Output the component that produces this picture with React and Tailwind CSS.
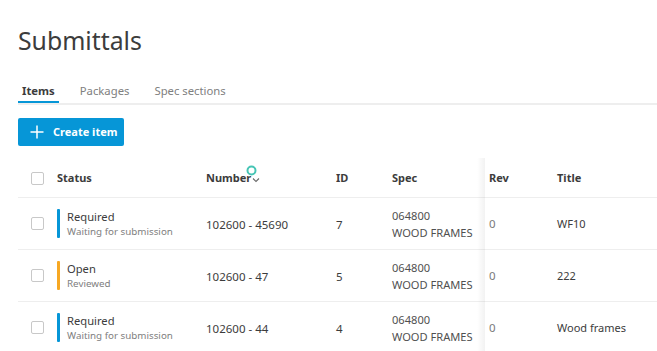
import React from "react";

const rows = [
  { status: "Required", sub: "Waiting for submission", bar: "bg-[#0696d7]", number: "102600 - 45690", id: "7", title: "WF10" },
  { status: "Open", sub: "Reviewed", bar: "bg-[#f7a823]", number: "102600 - 47", id: "5", title: "222" },
  { status: "Required", sub: "Waiting for submission", bar: "bg-[#0696d7]", number: "102600 - 44", id: "4", title: "Wood frames" },
];

function Checkbox() {
  return <div className="w-[13px] h-[13px] border border-[#c8c8c8] rounded-[2px] bg-white" />;
}

export default function App() {
  return (
    <div className="w-[657px] h-[351px] overflow-hidden bg-white text-[#3c3c3c]" style={{ fontFamily: '"Noto Sans", "Open Sans", sans-serif' }}>
      <div className="pl-[18px]">
        <h1 className="pt-[25px] text-[24.8px] leading-[30px] font-normal text-[#3c3c3c]">Submittals</h1>
        <div className="mt-[23px] flex gap-[17px] border-b-2 border-[#eeeeee]">
          <div className="px-[4px] h-[25px] -mb-[2px] border-b-2 border-[#0696d7] text-[11.3px] leading-[25px] font-bold text-[#3c3c3c]">Items</div>
          <div className="px-[4px] h-[25px] text-[11.3px] leading-[25px] text-[#808080]">Packages</div>
          <div className="px-[4px] h-[25px] text-[11.3px] leading-[25px] text-[#808080]">Spec sections</div>
        </div>
        <button className="mt-[13px] h-[28px] w-[106px] rounded-[2px] bg-[#0696d7] flex items-center pl-[12px] text-white text-[11px] font-bold">
          <svg width="14" height="14" viewBox="0 0 14 14" className="mr-[9px]">
            <path d="M7 0.5V13.5M0.5 7H13.5" stroke="white" strokeWidth="1.5" />
          </svg>
          Create item
        </button>
        <div className="relative mt-[14px]">
          <div className="flex items-center h-[38px] border-b border-[#eeeeee] text-[11px] font-bold text-[#3c3c3c]">
            <div className="w-[39px] pl-[13px]"><Checkbox /></div>
            <div className="w-[149px]">Status</div>
            <div className="w-[130px] relative flex items-center">
              <span>Number</span>
              <svg width="8" height="6" viewBox="0 0 8 6" className="ml-[1px] mt-[3px]">
                <path d="M1 1.5L4 4.5L7 1.5" stroke="#6a6a6a" strokeWidth="1.1" fill="none" />
              </svg>
              <svg width="11" height="11" viewBox="0 0 11 11" className="absolute left-[40px] -top-[5px]">
                <circle cx="5.5" cy="5.5" r="4" stroke="#46c5b5" strokeWidth="2" fill="white" />
              </svg>
            </div>
            <div className="w-[56px]">ID</div>
            <div className="w-[93px]">Spec</div>
            <div className="w-[72px] pl-[4px]">Rev</div>
            <div>Title</div>
          </div>
          {rows.map((r, i) => (
            <div key={i} className="flex items-center h-[52px] border-b border-[#eeeeee] text-[11px] text-[#3c3c3c]">
              <div className="w-[39px] pl-[13px]"><Checkbox /></div>
              <div className="w-[149px] flex items-center">
                <div className={`w-[3px] h-[29px] rounded-[1px] ${r.bar}`} />
                <div className="ml-[7px] flex flex-col">
                  <span className="leading-[16px] text-[11.2px]">{r.status}</span>
                  <span className="text-[9.8px] leading-[14px] text-[#808080]">{r.sub}</span>
                </div>
              </div>
              <div className="w-[130px] text-[11.5px] mt-[2px]">{r.number}</div>
              <div className="w-[56px] text-[11.5px] mt-[2px]">{r.id}</div>
              <div className="w-[93px] flex flex-col text-[11.1px] leading-[17px] text-[#505050] mt-[1px]">
                <span>064800</span>
                <span>WOOD FRAMES</span>
              </div>
              <div className="w-[72px] pl-[4px] text-[11.5px] text-[#7a7a7a]">0</div>
              <div className="text-[11px] mt-[2px]">{r.title}</div>
            </div>
          ))}
          <div className="absolute left-[459px] top-[-2px] bottom-0 w-[8px] bg-gradient-to-r from-transparent to-[rgba(0,0,0,0.05)]" />
        </div>
      </div>
    </div>
  );
}
